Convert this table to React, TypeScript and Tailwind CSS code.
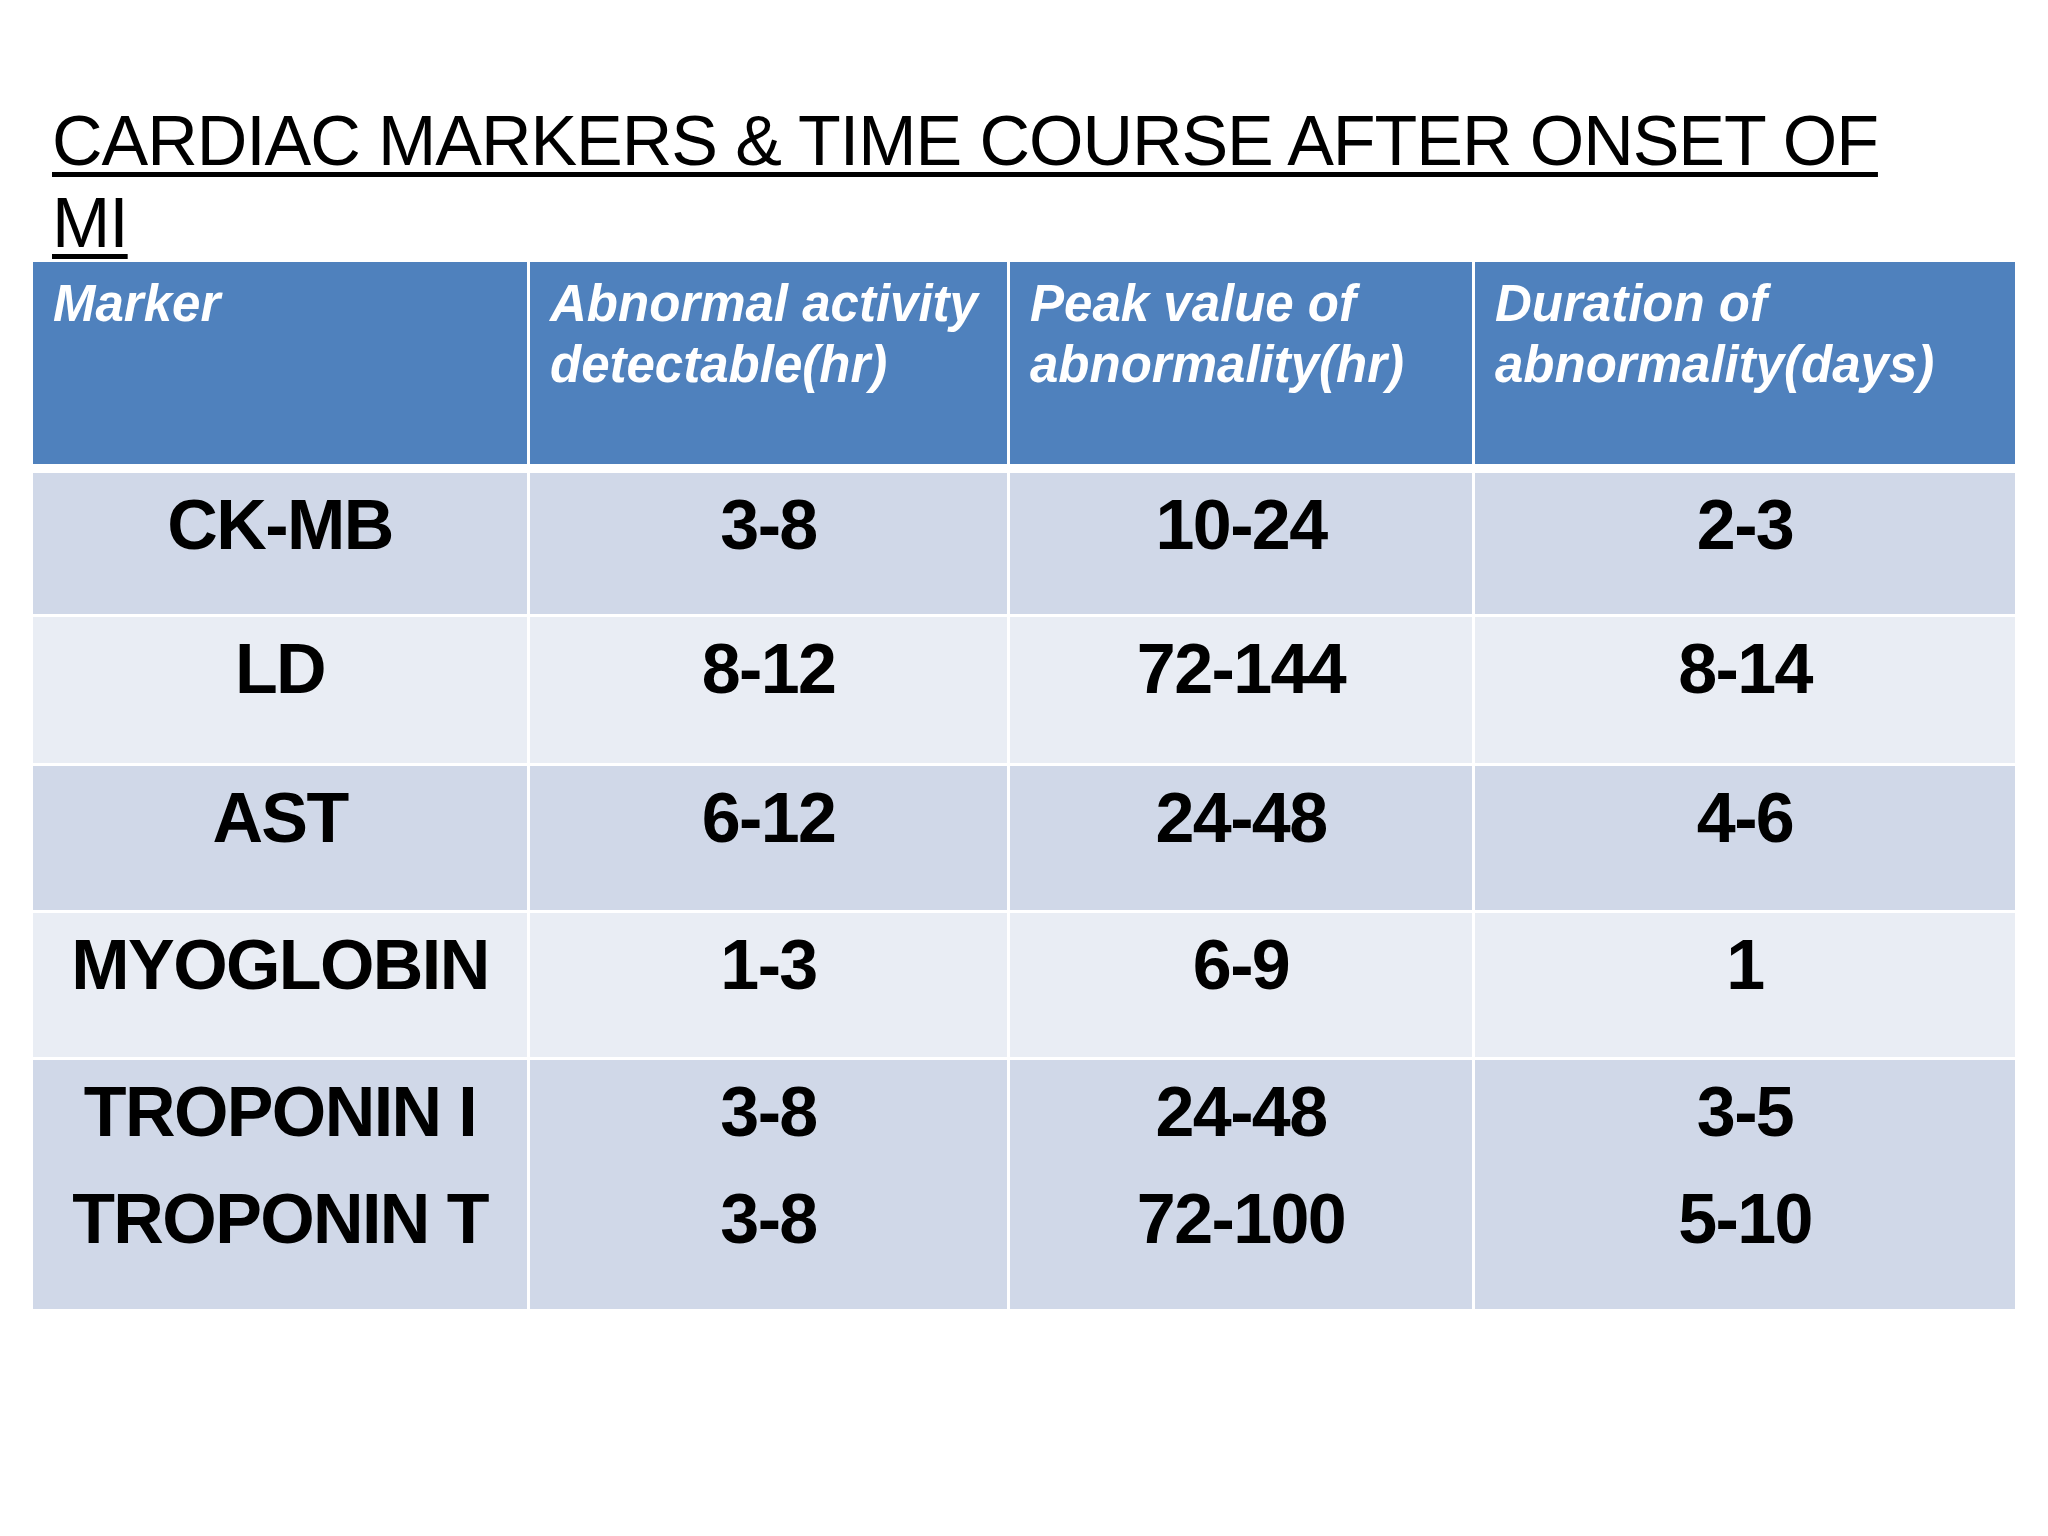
const headers = [
  ["Marker"],
  ["Abnormal activity", "detectable(hr)"],
  ["Peak value of", "abnormality(hr)"],
  ["Duration of", "abnormality(days)"],
];

const rows = [
  { height: "h-[141px]", bg: "bg-[#d0d8e8]", cells: [["CK-MB"], ["3-8"], ["10-24"], ["2-3"]] },
  { height: "h-[146px]", bg: "bg-[#e9edf4]", cells: [["LD"], ["8-12"], ["72-144"], ["8-14"]] },
  { height: "h-[144px]", bg: "bg-[#d0d8e8]", cells: [["AST"], ["6-12"], ["24-48"], ["4-6"]] },
  { height: "h-[144px]", bg: "bg-[#e9edf4]", cells: [["MYOGLOBIN"], ["1-3"], ["6-9"], ["1"]] },
  {
    height: "h-[249px]",
    bg: "bg-[#d0d8e8]",
    cells: [
      ["TROPONIN I", "TROPONIN T"],
      ["3-8", "3-8"],
      ["24-48", "72-100"],
      ["3-5", "5-10"],
    ],
  },
];

const cols = "grid grid-cols-[494px_477px_462px_540px] gap-x-[3px]";

export default function App() {
  return (
    <div className="w-[2048px] h-[1536px] bg-white font-['Liberation_Sans',Arial,sans-serif] text-black">
      {/* Title */}
      <div className="pl-[52px] pt-[100px]">
        <h1 className="h-[162px] text-[70px] leading-[82px] font-normal tracking-[-1.05px]">
          <span className="underline decoration-[5px] underline-offset-[7px]">
            CARDIAC MARKERS &amp; TIME COURSE AFTER ONSET OF
          </span>
          <br />
          <span className="underline decoration-[5px] underline-offset-[7px]">MI</span>
        </h1>
      </div>

      {/* Table */}
      <div className="ml-[33px] w-[1982px]">
        <div className={cols}>
          {headers.map((lines, i) => (
            <div
              key={i}
              className="h-[202px] bg-[#4f81bd] pt-[11px] pl-[20px] text-white font-bold italic text-[51px] leading-[61px]"
            >
              {lines.map((l) => (
                <div key={l} className="whitespace-nowrap">
                  {l}
                </div>
              ))}
            </div>
          ))}
        </div>

        <div className="mt-[9px] flex flex-col gap-y-[3px]">
          {rows.map((row, r) => (
            <div key={r} className={cols}>
              {row.cells.map((lines, c) => (
                <div
                  key={c}
                  className={`${row.height} ${row.bg} flex flex-col items-center pt-[11px] text-[70px] leading-[82px] font-bold tracking-[-1.6px]`}
                >
                  {lines.map((l, k) => (
                    <div key={k} className={k > 0 ? "mt-[25px] whitespace-nowrap" : "whitespace-nowrap"}>
                      {l}
                    </div>
                  ))}
                </div>
              ))}
            </div>
          ))}
        </div>
      </div>
    </div>
  );
}
